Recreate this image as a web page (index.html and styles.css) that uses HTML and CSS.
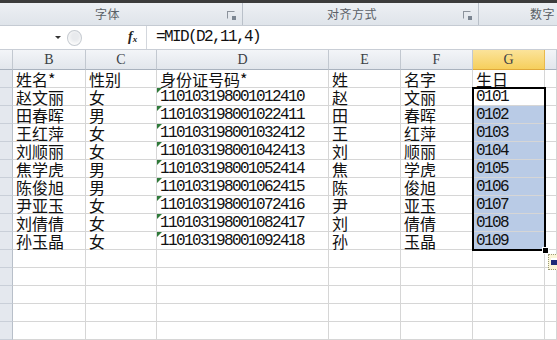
FILE: index.html
```html
<!DOCTYPE html>
<html lang="zh-CN">
<head>
    <meta charset="UTF-8">
    <title>身份证号码提取生日</title>
    <link rel="stylesheet" href="styles.css">
</head>
<body>
    <div class="top-band"></div>
    <div class="ribbon">
        <div class="group g-font"><span class="label">字体</span><span class="launcher"></span></div>
        <div class="group g-align"><span class="label">对齐方式</span><span class="launcher"></span></div>
        <div class="group g-num"><span class="label">数字</span></div>
    </div>
    <div class="formula-bar">
        <div class="namebox"><span class="arrow"></span></div>
        <div class="fx-area"><span class="cancel"></span><span class="fx">f<sub>x</sub></span></div>
        <div class="formula num">=MID(D2,11,4)</div>
    </div>

    <div class="sheet" id="sheet">
        <div class="hd rh"></div>
        <div class="hd">B</div>
        <div class="hd">C</div>
        <div class="hd">D</div>
        <div class="hd">E</div>
        <div class="hd">F</div>
        <div class="hd active">G</div>
        <div class="hd"></div>
    </div>
    <div class="selection"><span class="handle"></span></div>
    <div class="autofill"><span class="af-icon"></span></div>

    <script>
        const rows = [
            ["姓名*", "性别", "身份证号码*", "姓", "名字", "生日"],
            ["赵文丽", "女", "110103198001012410", "赵", "文丽", "0101"],
            ["田春晖", "男", "110103198001022411", "田", "春晖", "0102"],
            ["王红萍", "女", "110103198001032412", "王", "红萍", "0103"],
            ["刘顺丽", "女", "110103198001042413", "刘", "顺丽", "0104"],
            ["焦学虎", "男", "110103198001052414", "焦", "学虎", "0105"],
            ["陈俊旭", "男", "110103198001062415", "陈", "俊旭", "0106"],
            ["尹亚玉", "女", "110103198001072416", "尹", "亚玉", "0107"],
            ["刘倩倩", "女", "110103198001082417", "刘", "倩倩", "0108"],
            ["孙玉晶", "女", "110103198001092418", "孙", "玉晶", "0109"]
        ];
        const sheet = document.getElementById('sheet');

        // 建一个单元格
        function addCell(text, cls) {
            const cell = document.createElement('div');
            cell.className = 'cell ' + (cls || '');
            cell.textContent = text || '';
            sheet.appendChild(cell);
        }

        for (let r = 0; r < 15; r++) {
            const data = rows[r] || [];
            addCell('', 'rh');
            addCell(data[0]);
            addCell(data[1]);
            addCell(data[2], r > 0 && data[2] ? 'num flag' : '');
            addCell(data[3]);
            addCell(data[4]);
            let g = '';
            if (r > 0 && data[5]) g = 'num';
            if (r > 1 && data[5]) g += ' sel';
            addCell(data[5], g);
            addCell('');
        }
    </script>
</body>
</html>
```

FILE: styles.css
```css
body {
    margin: 0;
    width: 557px;
    height: 340px;
    overflow: hidden;
    background: #fff;
    font-family: "Noto Sans CJK SC", sans-serif;
    position: relative;
}

.top-band {
    height: 3px;
    background: #3c3c3c;
}

.ribbon {
    display: flex;
    height: 22px;
    background: linear-gradient(#edf0f4, #dfe4ea);
    border-bottom: 1px solid #c5cbd3;
}

.group {
    display: flex;
    align-items: center;
    border-right: 1px solid #b9c0c9;
    box-sizing: border-box;
    position: relative;
}

.g-font { width: 243px; padding-left: 95px; }
.g-align { width: 236px; padding-left: 84px; }
.g-num { flex: 1; padding-left: 51px; border-right: none; }

.label {
    font-size: 12px;
    line-height: 14px;
    color: #5a5f66;
    letter-spacing: 0.5px;
}

.launcher {
    position: absolute;
    right: 7px;
    top: 8px;
    width: 6px;
    height: 6px;
    border: 1px solid #8c939c;
    border-right-color: transparent;
    border-bottom-color: transparent;
}

.launcher::after {
    content: "";
    position: absolute;
    right: -2px;
    bottom: -2px;
    width: 4px;
    height: 4px;
    background: #7b8591;
}

.formula-bar {
    display: flex;
    height: 23px;
    border-bottom: 1px solid #c9ced6;
    background: #fff;
}

.namebox {
    width: 64px;
    position: relative;
}

.arrow {
    position: absolute;
    left: 55px;
    top: 10px;
    border-left: 3px solid transparent;
    border-right: 3px solid transparent;
    border-top: 3px solid #333;
}

.fx-area {
    width: 83px;
    position: relative;
    border-right: 1px solid #d3d7dd;
    box-sizing: border-box;
}

.cancel {
    position: absolute;
    left: 3px;
    top: 4px;
    width: 13px;
    height: 14px;
    border-radius: 50%;
    border: 1px solid #c6cbd1;
    background: radial-gradient(circle at 55% 40%, #e8eaed 30%, #fafafa 70%);
}

.fx {
    position: absolute;
    left: 64px;
    top: 2px;
    font-family: "Liberation Serif", serif;
    font-style: italic;
    font-weight: bold;
    font-size: 14px;
    line-height: 18px;
    color: #222;
}

.fx sub {
    font-size: 9px;
    vertical-align: -1px;
}

.formula {
    padding-left: 9px;
    line-height: 23px;
    font-size: 16px;
    color: #111;
}

.num {
    font-family: "Liberation Mono", monospace;
    letter-spacing: -1.6px;
}

.sheet {
    display: grid;
    grid-template-columns: 13px 73px 71px 172px 72px 72px 72px 12px;
    grid-template-rows: 20px;
    grid-auto-rows: 18px;
}

.hd {
    background: linear-gradient(#f3f5f8, #e2e6ec);
    border-right: 1px solid #c2c8d0;
    border-bottom: 1px solid #a9b2be;
    box-sizing: border-box;
    font-family: "Liberation Serif", serif;
    font-size: 14px;
    color: #3b3f45;
    text-align: center;
    line-height: 20px;
}

.hd.active {
    background: linear-gradient(#fbe39a, #f6cf5c);
    border-bottom-color: #e0a93a;
    border-right-color: #e8b94d;
}

.cell {
    border-right: 1px solid #d6d6d6;
    border-bottom: 1px solid #d6d6d6;
    box-sizing: border-box;
    font-size: 16px;
    line-height: 18px;
    padding-left: 3px;
    color: #111;
    white-space: nowrap;
    position: relative;
}

.cell.rh {
    background: #e4e8ee;
    border-right-color: #b8bfc9;
    border-bottom-color: #c9cfd8;
}

.cell.sel {
    background: #b9cbe6;
}

.flag::before {
    content: "";
    position: absolute;
    left: 0;
    top: 0;
    border-top: 5px solid #2f7a3a;
    border-right: 5px solid transparent;
}

.selection {
    position: absolute;
    left: 472px;
    top: 87px;
    width: 74px;
    height: 164px;
    border: 2px solid #000;
    box-sizing: border-box;
    pointer-events: none;
}

.handle {
    position: absolute;
    right: -5px;
    bottom: -5px;
    width: 5px;
    height: 5px;
    background: #000;
    border: 1px solid #fff;
}

.autofill {
    position: absolute;
    left: 548px;
    top: 254px;
    width: 12px;
    height: 16px;
    background: #fbf6d8;
    border: 1px dotted #9a9a7a;
    box-sizing: border-box;
}

.af-icon {
    position: absolute;
    left: 2px;
    top: 3px;
    width: 7px;
    height: 7px;
    background: #1e2a78;
    border-top: 2px solid #fff;
    box-sizing: border-box;
}
```
